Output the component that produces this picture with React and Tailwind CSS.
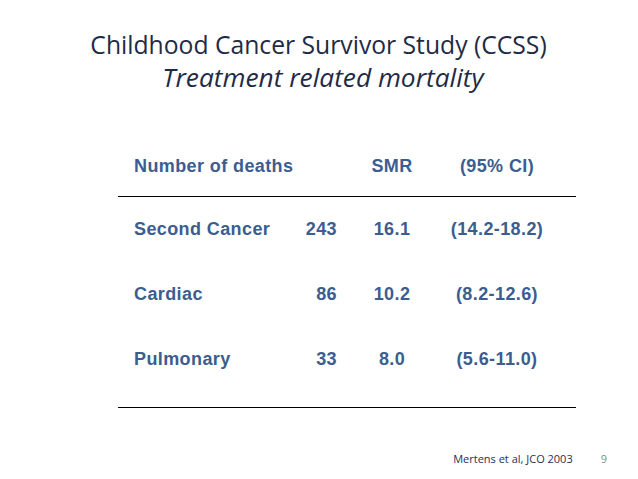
import React from "react";

const rows = [
  ["Second Cancer", "243", "16.1", "(14.2-18.2)"],
  ["Cardiac", "86", "10.2", "(8.2-12.6)"],
  ["Pulmonary", "33", "8.0", "(5.6-11.0)"],
];

export default function App() {
  return (
    <div className="w-[638px] h-[479px] bg-white flex flex-col overflow-hidden">
      <div className="pt-[28px] flex flex-col items-center text-[#1f2b45] leading-[33px] font-['Open_Sans',sans-serif]">
        <div className="text-[24.7px] pr-[1px]">Childhood Cancer Survivor Study (CCSS)</div>
        <div className="text-[26.3px] italic pl-[8px]">Treatment related mortality</div>
      </div>
      <div className="mt-[55px] ml-[118px] w-[458px] flex flex-col text-[#3b5d8f] font-bold text-[18px] tracking-[0.4px] font-['Liberation_Sans',Arial,sans-serif]">
        <div className="h-[34px] flex items-center pl-[16px]">
          <div className="w-[203px]">Number of deaths</div>
          <div className="w-[110px] text-center">SMR</div>
          <div className="w-[100px] text-center">(95% CI)</div>
        </div>
        <div className="mt-[13px] border-t border-black" />
        {rows.map((r) => (
          <div key={r[0]} className="h-[65px] flex items-center pl-[16px]">
            <div className="w-[150px] whitespace-nowrap">{r[0]}</div>
            <div className="w-[53px] text-right">{r[1]}</div>
            <div className="w-[110px] text-center">{r[2]}</div>
            <div className="w-[100px] text-center whitespace-nowrap">{r[3]}</div>
          </div>
        ))}
        <div className="mt-[15px] border-t border-black" />
      </div>
      <div className="mt-[41px] h-[20px] flex items-center justify-end pr-[31px] text-[11px] font-['Open_Sans',sans-serif]">
        <span className="text-[#1f2f55]">Mertens et al, JCO 2003</span>
        <span className="ml-[28px] text-[#8c8c8c]">9</span>
      </div>
    </div>
  );
}
